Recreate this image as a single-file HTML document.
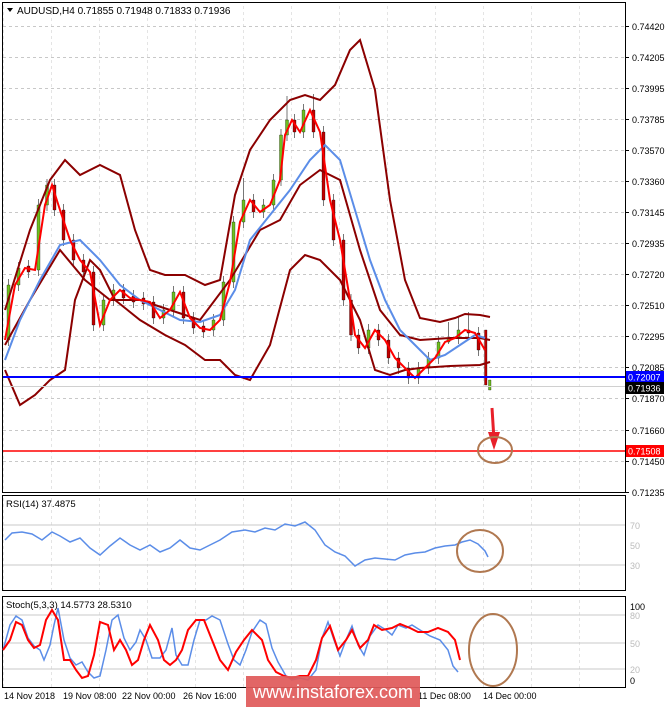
<!DOCTYPE html>
<html><head><meta charset="utf-8"><style>
html,body{margin:0;padding:0;background:#fff;width:665px;height:707px;overflow:hidden}
svg{display:block;font-family:"Liberation Sans",sans-serif}
</style></head><body>
<svg width="665" height="707" viewBox="0 0 665 707" xmlns="http://www.w3.org/2000/svg">
<defs>
<pattern id="vg" x="3.5" y="0" width="48" height="6" patternUnits="userSpaceOnUse">
<line x1="48" y1="0" x2="48" y2="3" stroke="#c8c8c8"/>
</pattern>
</defs>
<rect width="665" height="707" fill="#fff"/>
<rect x="3" y="3" width="622" height="489" fill="url(#vg)"/>
<rect x="3" y="496" width="622" height="94" fill="url(#vg)"/>
<rect x="3" y="597" width="622" height="90" fill="url(#vg)"/>
<g stroke="#c8c8c8" stroke-dasharray="3,3">
<path d="M3 26.5H625M3 57.5H625M3 88.5H625M3 119.5H625M3 150.5H625M3 181.5H625M3 212.5H625M3 243.5H625M3 274.5H625M3 305.5H625M3 336.5H625M3 367.5H625M3 398.5H625M3 430.5H625M3 461.5H625"/>
</g>
<rect x="2.5" y="2.5" width="623" height="490" fill="none" stroke="#000"/>
<rect x="2.5" y="495.5" width="623" height="95" fill="none" stroke="#000"/>
<rect x="2.5" y="596.5" width="623" height="91" fill="none" stroke="#000"/>
<path fill="none" stroke="#777" d="M8.5 279V346M18.5 262V291M28.5 260V278M38.5 199V276M47 179V211M54.5 179V216M63.5 204V246M73.5 234V266M83.5 254V278M93.5 266V331M103.5 294V331M113.5 284V306M123.5 284V304M133.5 290V308M143.5 292V310M153.5 296V324M163.5 304V324M173.5 286V316M183.5 286V324M193.5 312V334M203.5 320V338M213.5 314V336M223.5 276V326M233.5 216V288M243.5 178V228M253.5 194V218M263.5 199V218M273.5 174V211M281 129V186M287 96V141M294.5 114V138M303.5 104V138M313.5 94V138M323.5 126V206M333.5 194V246M343.5 234V306M351 294V341M358.5 329V354M368.5 324V354M378.5 324V346M388.5 334V364M398.5 352V374M408.5 362V384M418.5 362V384M428.5 352V374M438.5 336V364M448.5 322V344M458.5 316V344M468.5 312V339M478.5 327V356"/>
<path fill="#6fbf1f" stroke="#000" stroke-width="0.3" d="M7 285h3V340h-3ZM17 268h3V285h-3ZM37 205h3V270h-3ZM45.5 185h3V205h-3ZM102 300h3V325h-3ZM112 290h3V300h-3ZM162 310h3V318h-3ZM172 292h3V310h-3ZM212 320h3V330h-3ZM222 282h3V320h-3ZM232 222h3V282h-3ZM242 200h3V222h-3ZM262 205h3V212h-3ZM272 180h3V205h-3ZM279.5 135h3V180h-3ZM285.5 120h3V135h-3ZM302 110h3V132h-3ZM367 330h3V348h-3ZM417 368h3V378h-3ZM427 358h3V368h-3ZM437 342h3V358h-3ZM447 338h3V342h-3ZM457 330h3V338h-3ZM488.5 380h2.5V390h-2.5Z"/>
<path fill="#c00000" stroke="#000" stroke-width="0.3" d="M27 266h3V272h-3ZM53 185h3V210h-3ZM62 210h3V240h-3ZM72 240h3V260h-3ZM82 260h3V272h-3ZM92 272h3V325h-3ZM122 290h3V298h-3ZM132 296h3V302h-3ZM142 298h3V304h-3ZM152 302h3V318h-3ZM182 292h3V318h-3ZM192 318h3V328h-3ZM202 326h3V332h-3ZM252 200h3V212h-3ZM293 120h3V132h-3ZM312 110h3V132h-3ZM322 132h3V200h-3ZM332 200h3V240h-3ZM342 240h3V300h-3ZM349.5 300h3V335h-3ZM357 335h3V348h-3ZM377 330h3V340h-3ZM387 340h3V358h-3ZM397 358h3V368h-3ZM407 368h3V378h-3ZM467 330h3V333h-3ZM477 333h3V350h-3ZM484.5 330h2.5V385h-2.5Z"/>
<polyline fill="none" stroke="#8b0000" stroke-width="2" points="5,310 30,230 50,180 65,160 80,175 100,165 120,175 135,230 150,270 165,275 185,275 205,285 220,280 235,195 250,150 270,120 290,100 305,95 320,100 335,85 350,50 360,40 375,90 390,200 405,280 420,318 440,322 455,318 465,314 480,315 490,317"/>
<polyline fill="none" stroke="#8b0000" stroke-width="2" points="5,370 20,405 35,395 50,380 65,370 75,300 90,260 100,270 115,300 140,320 165,335 185,345 205,360 220,360 235,375 250,380 270,345 290,270 305,255 320,260 340,280 360,320 375,370 390,375 405,370 420,368 450,366 480,365 490,362"/>
<polyline fill="none" stroke="#8b0000" stroke-width="2" points="5,345 30,300 60,250 85,280 110,300 140,300 170,310 200,320 230,280 260,230 280,220 300,185 320,170 340,180 360,250 380,310 400,335 420,340 450,338 480,338 490,340"/>
<polyline fill="none" stroke="#5b8de8" stroke-width="2" points="5,360 20,320 40,280 60,245 80,240 100,260 120,285 140,300 160,310 180,320 200,322 220,315 235,290 250,240 270,215 290,190 310,160 325,145 340,160 355,210 370,260 385,300 400,330 415,345 430,360 445,355 460,345 475,335 485,338"/>
<polyline fill="none" stroke="#ff0000" stroke-width="2" points="5,340 15,285 25,268 35,270 45,205 52,185 60,210 70,240 80,260 90,272 100,325 110,300 120,290 130,298 140,300 150,302 160,318 170,310 180,292 190,318 200,328 210,330 220,320 230,282 240,222 250,200 260,212 270,205 280,180 285,135 292,120 300,132 310,110 320,132 330,200 340,240 350,300 355,335 365,348 375,330 385,340 395,358 405,368 415,378 425,368 435,358 445,342 455,338 465,330 475,333 485,350"/>
<line x1="3" y1="377" x2="625" y2="377" stroke="#0000ff" stroke-width="2"/>
<line x1="3" y1="386.5" x2="625" y2="386.5" stroke="#d0d0d0"/>
<line x1="3" y1="451" x2="625" y2="451" stroke="#ff0000" stroke-width="1.5"/>
<line x1="492" y1="408" x2="494" y2="440" stroke="#e8202a" stroke-width="3"/>
<polygon points="488,432 500,432 494,450" fill="#e8202a"/>
<ellipse cx="495" cy="450" rx="17" ry="13" fill="none" stroke="#b07850" stroke-width="2"/>
<polygon points="7,8 13,8 10,12" fill="#000"/>
<text x="17" y="14" font-size="10" fill="#000">AUDUSD,H4  0.71855 0.71948 0.71833 0.71936</text>
<path stroke="#000" d="M625 26.5h4M625 57.5h4M625 88.5h4M625 119.5h4M625 150.5h4M625 181.5h4M625 212.5h4M625 243.5h4M625 274.5h4M625 305.5h4M625 336.5h4M625 367.5h4M625 398.5h4M625 430.5h4M625 461.5h4M625 492.5h4"/>
<g font-size="9" fill="#000">
<text x="632" y="30">0.74420</text><text x="632" y="61">0.74205</text><text x="632" y="92">0.73995</text><text x="632" y="123">0.73785</text><text x="632" y="154">0.73570</text><text x="632" y="185">0.73360</text><text x="632" y="216">0.73145</text><text x="632" y="247">0.72935</text><text x="632" y="278">0.72720</text><text x="632" y="309">0.72510</text><text x="632" y="340">0.72295</text><text x="632" y="371">0.72085</text><text x="632" y="402">0.71870</text><text x="632" y="434">0.71660</text><text x="632" y="465">0.71450</text><text x="632" y="496">0.71235</text>
</g>
<rect x="626" y="371" width="38" height="12" fill="#0000ff"/><text x="628" y="380.5" font-size="9" fill="#fff">0.72007</text>
<rect x="626" y="382" width="38" height="12" fill="#000"/><text x="628" y="391.5" font-size="9" fill="#fff">0.71936</text>
<rect x="626" y="445" width="38" height="12" fill="#ff0000"/><text x="628" y="454.5" font-size="9" fill="#fff">0.71508</text>
<text x="6" y="507" font-size="9.5">RSI(14) 37.4875</text>
<line x1="3" y1="525" x2="625" y2="525" stroke="#c8c8c8"/>
<line x1="3" y1="565" x2="625" y2="565" stroke="#c8c8c8"/>
<polyline fill="none" stroke="#5b8de8" stroke-width="1.5" points="5,540 12,533 22,532 32,534 42,540 52,532 60,536 70,542 80,538 90,548 100,555 110,546 120,538 130,545 140,550 150,545 160,552 170,548 180,540 190,548 200,550 210,545 220,540 232,532 245,530 255,532 265,528 275,530 285,524 295,526 305,522 315,530 325,545 335,552 345,556 355,566 365,560 375,558 385,559 395,560 405,555 415,553 425,552 435,548 445,546 455,545 462,542 470,540 478,544 485,551 488,557"/>
<ellipse cx="480" cy="551" rx="23" ry="21" fill="none" stroke="#b07850" stroke-width="2"/>
<text x="6" y="608" font-size="9.5">Stoch(5,3,3) 14.5773 28.5310</text>
<line x1="3" y1="615" x2="625" y2="615" stroke="#c8c8c8"/>
<line x1="3" y1="643" x2="625" y2="643" stroke="#c8c8c8"/>
<line x1="3" y1="669" x2="625" y2="669" stroke="#c8c8c8"/>
<polyline fill="none" stroke="#5b8de8" stroke-width="1.5" points="3,650 10,625 16,616 22,620 28,638 34,646 40,650 44,660 50,645 54,625 58,608 64,640 70,658 76,665 82,662 88,672 94,678 100,676 106,650 112,620 118,615 124,638 130,650 136,642 140,630 146,640 152,658 160,658 166,650 172,628 176,655 182,665 188,665 194,640 200,620 206,620 212,616 220,620 228,644 234,660 240,665 246,650 252,632 260,620 266,624 272,648 278,662 286,676 292,680 300,678 308,680 316,670 322,638 328,622 334,640 340,656 346,640 352,626 358,645 364,655 370,636 378,625 386,630 392,635 398,625 406,628 412,625 420,630 430,636 440,640 448,650 453,666 458,672"/>
<polyline fill="none" stroke="#ff0000" stroke-width="2" points="3,650 10,640 16,622 22,625 28,640 34,648 40,645 46,620 52,610 58,620 64,660 70,660 76,670 82,678 88,676 94,655 100,622 108,625 114,650 120,640 126,650 132,665 138,660 144,640 150,625 158,640 164,660 170,665 176,660 182,650 188,630 196,620 204,620 212,640 220,660 228,670 236,652 244,640 252,630 262,640 268,660 276,672 284,676 292,678 300,676 308,676 316,660 322,638 330,626 338,650 346,640 352,630 360,648 368,640 374,625 382,630 392,628 400,624 410,628 418,632 428,632 438,628 448,632 455,640 460,660"/>
<ellipse cx="493" cy="650" rx="24" ry="36" fill="none" stroke="#b07850" stroke-width="2"/>
<g font-size="9">
<text x="630" y="610">100</text><text x="630" y="619" fill="#bbb">80</text><text x="630" y="647" fill="#bbb">50</text><text x="630" y="673" fill="#bbb">20</text><text x="630" y="684">0</text>
<text x="630" y="529" fill="#bbb">70</text><text x="630" y="549" fill="#bbb">50</text><text x="630" y="569" fill="#bbb">30</text>
</g>
<g font-size="9" fill="#000">
<text x="4" y="699">14 Nov 2018</text><text x="63" y="699">19 Nov 08:00</text><text x="122" y="699">22 Nov 00:00</text><text x="183" y="699">26 Nov 16:00</text><text x="418" y="699">11 Dec 08:00</text><text x="483" y="699">14 Dec 00:00</text>
</g>
<rect x="246" y="676" width="174" height="31" fill="#e05a5a" opacity="0.93"/>
<text x="333" y="698" font-size="18" fill="#fff" text-anchor="middle">www.instaforex.com</text>
</svg>
</body></html>
